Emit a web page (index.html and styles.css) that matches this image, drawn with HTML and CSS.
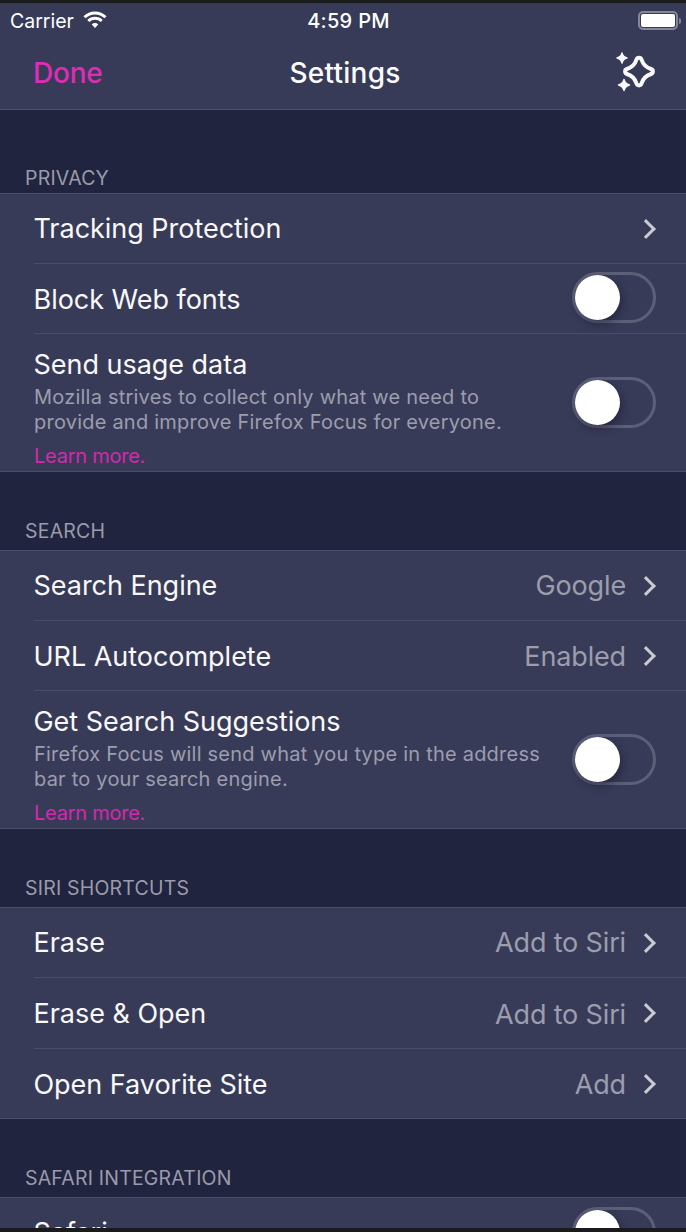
FILE: index.html
```html
<!DOCTYPE html>
<html lang="en">
<head>
    <meta charset="UTF-8">
    <meta name="viewport" content="width=device-width, initial-scale=1.0">
    <title>Settings</title>
    <link rel="stylesheet" href="styles.css">
</head>
<body>
<div class="screen">
    <div class="edge edge-top"></div>
    <div class="content">
        <div class="topbar">
            <div class="status">
                <div class="status-left">
                    <span>Carrier</span>
                    <svg class="wifi" width="24" height="18" viewBox="0 0 24 18">
                        <path d="M1.500 6.200a15 15 0 0 1 21 0" fill="none" stroke="#fff" stroke-width="3"/>
                        <path d="M5.300 10a9.600 9.600 0 0 1 13.400 0" fill="none" stroke="#fff" stroke-width="3"/>
                        <path d="M8.800 13.400a4.600 4.600 0 0 1 6.400 0L12 17z" fill="#fff"/>
                    </svg>
                </div>
                <div class="status-time">4:59 PM</div>
                <div class="status-right">
                    <div class="battery"><div class="battery-fill"></div></div>
                    <div class="battery-tip"></div>
                </div>
            </div>
            <div class="nav">
                <span class="nav-done">Done</span>
                <span class="nav-title">Settings</span>
                <svg class="nav-icon" width="42" height="42" viewBox="0 0 42 42">
                    <path d="M20.500 7.500C21.300 5 24.700 5 25.500 7.500C26.800 11.800 30.200 15.400 35 17C37.500 17.800 37.500 21.200 35 22C30.200 23.600 26.800 27.200 25.500 31.500C24.700 34 21.300 34 20.500 31.500C19.200 27.200 15.800 23.600 11 22C8.500 21.200 8.500 17.800 11 17C15.800 15.400 19.200 11.800 20.500 7.500Z" fill="none" stroke="#f8f8f8" stroke-width="4"/>
                    <path d="M6 1Q7 5 11 6Q7 7 6 11Q5 7 1 6Q5 5 6 1Z" fill="#f8f8f8" stroke="#f8f8f8" stroke-width="1.400" stroke-linejoin="round"/>
                    <path d="M8 27.500Q9 32 13.500 33Q9 34 8 38.500Q7 34 2.500 33Q7 32 8 27.500Z" fill="#f8f8f8" stroke="#f8f8f8" stroke-width="1.400" stroke-linejoin="round"/>
                </svg>
            </div>
        </div>

        <div class="section-head first">PRIVACY</div>
        <div class="group">
            <div class="row">
                <span class="row-title">Tracking Protection</span>
                <span class="chevron"></span>
            </div>
            <div class="row">
                <span class="row-title">Block Web fonts</span>
                <span class="toggle"></span>
            </div>
            <div class="row row-tall">
                <div class="row-text">
                    <div class="row-title">Send usage data</div>
                    <div class="row-sub">Mozilla strives to collect only what we need to<br>provide and improve Firefox Focus for everyone.</div>
                    <div class="row-link">Learn more.</div>
                </div>
                <span class="toggle"></span>
            </div>
        </div>

        <div class="section-head">SEARCH</div>
        <div class="group">
            <div class="row">
                <span class="row-title">Search Engine</span>
                <span class="row-value">Google</span>
                <span class="chevron"></span>
            </div>
            <div class="row">
                <span class="row-title">URL Autocomplete</span>
                <span class="row-value">Enabled</span>
                <span class="chevron"></span>
            </div>
            <div class="row row-tall">
                <div class="row-text">
                    <div class="row-title">Get Search Suggestions</div>
                    <div class="row-sub">Firefox Focus will send what you type in the address<br>bar to your search engine.</div>
                    <div class="row-link">Learn more.</div>
                </div>
                <span class="toggle"></span>
            </div>
        </div>

        <div class="section-head">SIRI SHORTCUTS</div>
        <div class="group group-siri">
            <div class="row">
                <span class="row-title">Erase</span>
                <span class="row-value">Add to Siri</span>
                <span class="chevron"></span>
            </div>
            <div class="row">
                <span class="row-title">Erase &amp; Open</span>
                <span class="row-value">Add to Siri</span>
                <span class="chevron"></span>
            </div>
            <div class="row">
                <span class="row-title">Open Favorite Site</span>
                <span class="row-value">Add</span>
                <span class="chevron"></span>
            </div>
        </div>

        <div class="section-head">SAFARI INTEGRATION</div>
        <div class="group">
            <div class="row">
                <span class="row-title">Safari</span>
                <span class="toggle"></span>
            </div>
        </div>
    </div>
    <div class="edge edge-bottom"></div>
</div>
</body>
</html>
```
FILE: styles.css
```css
* {
    box-sizing: border-box;
}
html, body {
    margin: 0;
    padding: 0;
}
body {
    background: #1c1c1e;
    font-family: "Inter", "Liberation Sans", sans-serif;
    color: #fff;
}
.screen {
    width: 686px;
    height: 1232px;
    display: flex;
    flex-direction: column;
    overflow: hidden;
}
.edge {
    flex: none;
    background: #1b1b1d;
}
.edge-top {
    height: 3px;
}
.edge-bottom {
    height: 4px;
}
.content {
    flex: 1;
    min-height: 0;
    overflow: hidden;
    background: #21243f;
}

/* status bar + nav */
.topbar {
    height: 107px;
    background: #383b58;
    border-bottom: 1px solid #4d4f6c;
}
.status {
    height: 35px;
    display: flex;
    align-items: center;
    justify-content: space-between;
    padding: 0 5px 0 10px;
    position: relative;
    font-size: 19.500px;
}
.status-left {
    display: flex;
    align-items: center;
    gap: 9px;
}
.wifi {
    margin-top: -1px;
}
.status-time {
    position: absolute;
    left: 11px;
    right: 0;
    text-align: center;
    font-size: 20px;
    font-weight: 500;
    letter-spacing: 0.300px;
    pointer-events: none;
}
.status-right {
    display: flex;
    align-items: center;
    gap: 1px;
}
.battery {
    width: 40px;
    height: 19px;
    border: 2px solid #85869a;
    border-radius: 5px;
    padding: 1px;
}
.battery-fill {
    height: 100%;
    background: #fff;
    border-radius: 2px;
}
.battery-tip {
    width: 2px;
    height: 6px;
    background: #85869a;
    border-radius: 0 2px 2px 0;
}
.nav {
    height: 71px;
    display: flex;
    align-items: center;
    justify-content: space-between;
    padding: 0 28px 2px 33px;
    position: relative;
    font-size: 28px;
    font-weight: 500;
}
.nav-done {
    color: #df2cb6;
    letter-spacing: -0.200px;
}
.nav-title {
    position: absolute;
    left: 4px;
    right: 0;
    text-align: center;
    letter-spacing: 0.250px;
    color: #fafafa;
}
.nav-icon {
    position: relative;
}

/* sections */
.section-head {
    height: 78px;
    padding: 0 25px 7px;
    display: flex;
    align-items: flex-end;
    font-size: 19.500px;
    letter-spacing: 0.200px;
    color: #9a9bab;
}
.section-head.first {
    height: 83px;
    padding-bottom: 3px;
}
.group {
    background: #383b58;
    border-top: 1px solid #4a4c69;
    border-bottom: 1px solid #4a4c69;
    padding-left: 34px;
}
.row {
    height: 70px;
    display: flex;
    align-items: center;
    padding-right: 30px;
    border-bottom: 1px solid #4a4c69;
}
.row:last-child {
    border-bottom: 0;
    height: 69px;
}
.group-siri .row:nth-child(2) {
    height: 71px;
}
.row.row-tall {
    height: 137px;
}
.row + .row > .row-title,
.row + .row > .row-value {
    margin-top: 2px;
}
.row + .row > .toggle {
    margin-bottom: 2px;
}
.row + .row.row-tall > .toggle {
    margin-bottom: 0;
}
.row-title {
    margin-left: -0.500px;
    font-size: 27px;
    line-height: 32px;
    letter-spacing: -0.030px;
    color: #f8f8f8;
}
.row-text {
    flex: 1;
    align-self: flex-start;
    padding-top: 15px;
}
.row-sub {
    margin-top: 4px;
    font-size: 20px;
    line-height: 25px;
    letter-spacing: 0.220px;
    color: #9c9dad;
}
.row-link {
    margin-top: 9px;
    font-size: 20px;
    line-height: 25px;
    letter-spacing: -0.250px;
    color: #d329ad;
}
.row-value {
    margin-left: auto;
    font-size: 27px;
    letter-spacing: -0.150px;
    color: #9c9dad;
}
.chevron {
    flex: none;
    width: 14px;
    height: 14px;
    margin: 0 3px 0 auto;
    border-top: 3px solid #cacad2;
    border-right: 3px solid #cacad2;
    transform: rotate(45deg);
}
.row-value + .chevron {
    margin-left: 13px;
}

/* switch, always off in this screen */
.toggle {
    flex: none;
    position: relative;
    width: 84px;
    height: 51px;
    margin-left: auto;
    border: 3px solid #5d5f78;
    border-radius: 26px;
}
.toggle::after {
    content: "";
    position: absolute;
    left: 0;
    top: 0;
    width: 45px;
    height: 45px;
    border-radius: 50%;
    background: #fff;
    box-shadow: 2px 4px 8px rgba(15, 15, 35, 0.45);
}
```
